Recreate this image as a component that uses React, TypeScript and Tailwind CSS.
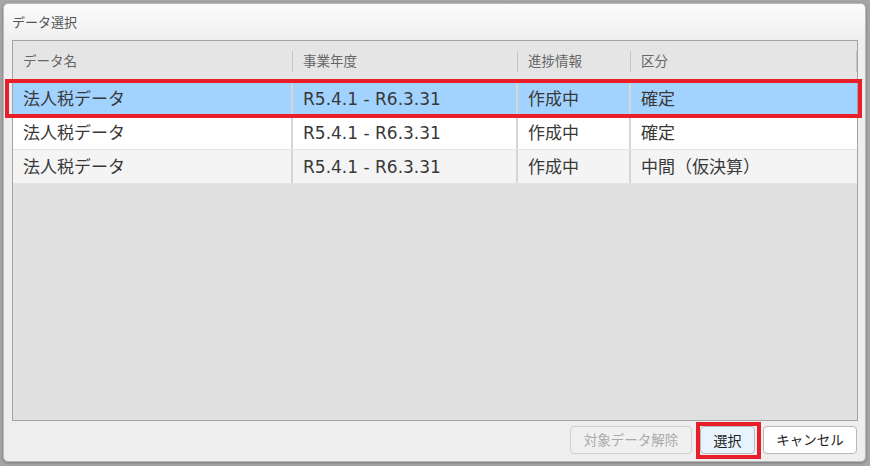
import React from "react";

type Row = {
  name: string;
  period: string;
  status: string;
  kind: string;
};

const rows: Row[] = [
  { name: "法人税データ", period: "R5.4.1 - R6.3.31", status: "作成中", kind: "確定" },
  { name: "法人税データ", period: "R5.4.1 - R6.3.31", status: "作成中", kind: "確定" },
  { name: "法人税データ", period: "R5.4.1 - R6.3.31", status: "作成中", kind: "中間（仮決算）" },
];

const headers = ["データ名", "事業年度", "進捗情報", "区分"];

const cols = "grid grid-cols-[280px_225px_113px_1fr]";

function DataGrid() {
  return (
    <div className="flex-1 mx-[8px] mr-[7px] border border-[#a3a3a3] bg-[#e0e0e0] flex flex-col">
      <div className={`${cols} h-[41px] bg-[#e5e5e5] items-center`}>
        {headers.map((h) => (
          <div key={h} className="flex items-center h-full">
            <span className="flex-1 pl-[10px] text-[13.5px] text-[#666]">{h}</span>
            <span className="w-px h-[21px] bg-[#c4c4c4]" />
          </div>
        ))}
      </div>
      {rows.map((r, idx) => {
        const bg = idx === 0 ? "bg-[#a2d2fe]" : idx === 1 ? "bg-white" : "bg-[#f4f4f4]";
        return (
          <div key={idx} className={`${cols} h-[34px] ${bg} border-b border-[#e4e4e4]`}>
            {[r.name, r.period, r.status, r.kind].map((c, j) => (
              <div
                key={j}
                className={`flex items-center pl-[10px] text-[17px] leading-[22px] text-[#383838] font-[DejaVu_Sans,Noto_Sans_CJK_JP,sans-serif] ${
                  j < 3 ? "border-r-2 border-[#d6d6d6]" : ""
                }`}
              >
                {c}
              </div>
            ))}
          </div>
        );
      })}
    </div>
  );
}

function Button({
  children,
  disabled,
  primary,
  className,
}: {
  children: React.ReactNode;
  disabled?: boolean;
  primary?: boolean;
  className?: string;
}) {
  return (
    <button
      disabled={disabled}
      className={`h-[28px] rounded-[4px] border text-[13.5px] flex items-center justify-center ${
        disabled
          ? "border-[#cfcfcf] text-[#aaaaaa] bg-[#f0f0f0]"
          : primary
          ? "border-[#b9b9b9] text-[#222] bg-[#e8f4fd]"
          : "border-[#b9b9b9] text-[#222] bg-white"
      } ${className ?? ""}`}
    >
      {children}
    </button>
  );
}

export default function App() {
  return (
    <div className="relative w-[870px] h-[466px] overflow-hidden bg-[#a6a6a6] pt-[3px] pl-[3px] pr-[4px] pb-[4px] font-[Open_Sans,Noto_Sans_CJK_JP,sans-serif]">
      <div className="h-full flex flex-col rounded-[5px] border border-[#b8b8b8] bg-linear-to-b from-[#fbfbfb] to-[#eeeeee] to-[9%] shadow-[0_1px_3px_rgba(0,0,0,0.3)]">
        <div className="h-[36px] pt-[8px] pl-[8px] text-[13px] leading-[20px] text-[#555]">
          データ選択
        </div>
        <DataGrid />
        <div className="h-[40px] flex justify-end items-start pt-[5px] pr-[8px] gap-[8px]">
          <Button disabled className="w-[122px]">
            対象データ解除
          </Button>
          <Button primary className="w-[55px] text-[14px]">
            選択
          </Button>
          <Button className="w-[94px]">キャンセル</Button>
        </div>
      </div>
      <div className="absolute left-[5px] top-[79px] w-[857px] h-[39px] border-4 border-[#e81f2a]" />
      <div className="absolute left-[696px] top-[422px] w-[65px] h-[37px] border-4 border-[#e81f2a]" />
    </div>
  );
}
